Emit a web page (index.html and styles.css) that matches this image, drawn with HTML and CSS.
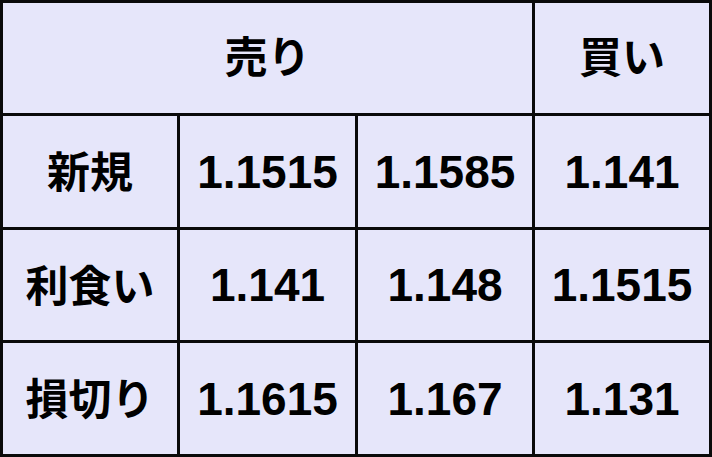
FILE: index.html
```html
<!DOCTYPE html>
<html lang="ja">
<head>
<meta charset="utf-8">
<link rel="stylesheet" href="styles.css">
</head>
<body>
<div class="table">
  <div class="cell jp head sell">売り</div>
  <div class="cell jp head">買い</div>
  <div class="cell jp">新規</div>
  <div class="cell num">1.1515</div>
  <div class="cell num">1.1585</div>
  <div class="cell num">1.141</div>
  <div class="cell jp">利食い</div>
  <div class="cell num">1.141</div>
  <div class="cell num">1.148</div>
  <div class="cell num">1.1515</div>
  <div class="cell jp">損切り</div>
  <div class="cell num">1.1615</div>
  <div class="cell num">1.167</div>
  <div class="cell num">1.131</div>
</div>
</body>
</html>
```
FILE: styles.css
```css
html, body {
  margin: 0;
  padding: 0;
  background: #e6e6fa;
}
.table {
  width: 712px;
  height: 457px;
  box-sizing: border-box;
  padding: 3px;
  background: #0a0a0a;
  display: grid;
  grid-template-columns: 174px 175px 174px 174px;
  grid-template-rows: 110px 111px 110px 111px;
  gap: 3px;
}
.cell {
  background: #e6e6fa;
  display: flex;
  align-items: center;
  justify-content: center;
  color: #000;
}
.sell {
  grid-column: 1 / span 3;
}
.jp {
  font-family: "Noto Sans CJK JP", sans-serif;
  font-weight: 700;
  font-size: 43px;
  line-height: 1;
  padding-bottom: 4px;
}
.head {
  padding-bottom: 8px;
}
.num {
  font-family: "Liberation Sans", Arial, sans-serif;
  font-weight: 700;
  font-size: 46px;
  line-height: 1;
}
```
